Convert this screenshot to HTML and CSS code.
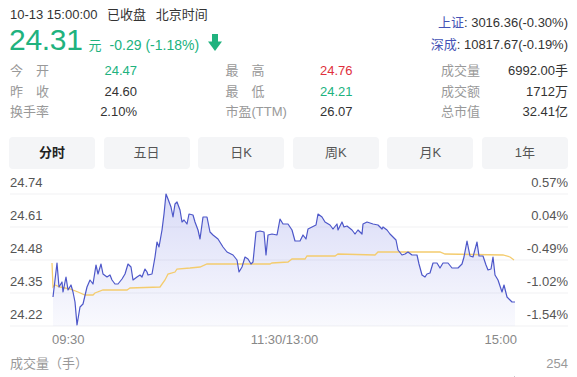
FILE: index.html
```html
<!DOCTYPE html>
<html>
<head>
  <meta charset="utf-8">
  <link rel="stylesheet" href="styles.css">
</head>
<body>
  <div class="page">
    <div class="header">
      <div class="quote">
        <div class="time-line">
          <span>10-13 15:00:00</span>
          <span>已收盘</span>
          <span>北京时间</span>
        </div>
        <div class="price-line">
          <span class="price">24.31</span>
          <span class="unit">元</span>
          <span class="change">-0.29 (-1.18%)</span>
          <svg class="down-arrow" width="14" height="17" viewBox="0 0 14 17">
            <rect x="4" y="0" width="6" height="8" fill="#20b27e"/>
            <polygon points="0,7.5 14,7.5 7,17" fill="#20b27e"/>
          </svg>
        </div>
      </div>
      <div class="index-list">
        <div><span class="index-name">上证</span>: 3016.36(-0.30%)</div>
        <div><span class="index-name">深成</span>: 10817.67(-0.19%)</div>
      </div>
    </div>

    <div class="stats">
      <div class="stat-col">
        <div class="stat-row"><span class="stat-label">今　开</span><span class="stat-value down">24.47</span></div>
        <div class="stat-row"><span class="stat-label">昨　收</span><span class="stat-value">24.60</span></div>
        <div class="stat-row"><span class="stat-label">换手率</span><span class="stat-value">2.10%</span></div>
      </div>
      <div class="stat-col">
        <div class="stat-row"><span class="stat-label">最　高</span><span class="stat-value up">24.76</span></div>
        <div class="stat-row"><span class="stat-label">最　低</span><span class="stat-value down">24.21</span></div>
        <div class="stat-row"><span class="stat-label">市盈(TTM)</span><span class="stat-value">26.07</span></div>
      </div>
      <div class="stat-col">
        <div class="stat-row"><span class="stat-label">成交量</span><span class="stat-value">6992.00手</span></div>
        <div class="stat-row"><span class="stat-label">成交额</span><span class="stat-value">1712万</span></div>
        <div class="stat-row"><span class="stat-label">总市值</span><span class="stat-value">32.41亿</span></div>
      </div>
    </div>

    <div class="tabs">
      <div class="tab active">分时</div>
      <div class="tab">五日</div>
      <div class="tab">日K</div>
      <div class="tab">周K</div>
      <div class="tab">月K</div>
      <div class="tab">1年</div>
    </div>

    <svg class="chart" width="558" height="160" viewBox="10 170 558 160">
      <defs>
        <linearGradient id="area-fill" gradientUnits="userSpaceOnUse" x1="0" y1="190" x2="0" y2="324">
          <stop offset="0" stop-color="#6c74e0" stop-opacity="0.26"/>
          <stop offset="1" stop-color="#6c74e0" stop-opacity="0.04"/>
        </linearGradient>
      </defs>
      <g class="grid">
        <line x1="10" y1="192" x2="568" y2="192"/>
        <line x1="10" y1="225" x2="568" y2="225"/>
        <line x1="10" y1="258" x2="568" y2="258"/>
        <line x1="10" y1="291" x2="568" y2="291"/>
        <line x1="10" y1="324" x2="568" y2="324"/>
      </g>
      <polygon class="area" points="53,324 53,295 57,261 59,285 62,280 63,290 66,275 68,288 71,283 73,290 75,300 77,323 80,305 83,302 87,285 90,278 93,282 96,263 98,272 101,262 103,272 107,275 110,273 112,278 115,282 118,282 122,277 125,272 128,262 131,265 133,278 137,275 140,273 142,275 145,267 147,270 148,273 152,272 155,255 157,240 159,245 162,228 164,212 166,192 168,197 171,205 173,215 175,202 177,200 180,208 182,220 184,218 187,222 189,212 193,213 195,220 198,228 200,237 203,215 207,215 210,230 213,233 218,237 223,245 227,250 233,253 237,258 239,270 242,265 245,255 248,257 251,262 253,260 256,230 260,229 264,230 266,253 268,233 272,232 277,233 280,217 283,222 288,222 292,228 295,239 300,239 303,233 306,237 308,227 312,225 316,223 318,212 322,215 325,220 330,223 333,227 337,222 338,228 342,220 344,225 347,224 352,228 355,232 358,228 362,232 363,222 367,220 373,222 378,223 382,227 383,225 387,228 390,232 393,235 396,238 398,248 402,253 405,252 408,250 412,253 417,253 419,262 422,273 425,275 427,272 430,271 433,261 437,261 440,266 443,261 448,261 452,266 458,266 462,262 464,255 467,239 470,254 473,255 477,240 479,254 483,254 486,263 488,268 491,267 493,255 495,273 498,278 502,290 504,283 507,295 510,298 512,300 515,300 515,324"/>
      <polyline class="avg-line" points="52,261 53,285 55,283 60,285 70,287 78,290 85,293 93,293 95,291 103,288 127,288 130,286 160,285 165,278 168,272 175,270 177,267 190,266 200,265 207,262 270,262 272,261 288,260 292,257 305,257 307,254 335,254 338,252 375,253 378,250 440,250 445,252 503,253 510,255 514,258"/>
      <polyline class="price-line-path" points="53,295 57,261 59,285 62,280 63,290 66,275 68,288 71,283 73,290 75,300 77,323 80,305 83,302 87,285 90,278 93,282 96,263 98,272 101,262 103,272 107,275 110,273 112,278 115,282 118,282 122,277 125,272 128,262 131,265 133,278 137,275 140,273 142,275 145,267 147,270 148,273 152,272 155,255 157,240 159,245 162,228 164,212 166,192 168,197 171,205 173,215 175,202 177,200 180,208 182,220 184,218 187,222 189,212 193,213 195,220 198,228 200,237 203,215 207,215 210,230 213,233 218,237 223,245 227,250 233,253 237,258 239,270 242,265 245,255 248,257 251,262 253,260 256,230 260,229 264,230 266,253 268,233 272,232 277,233 280,217 283,222 288,222 292,228 295,239 300,239 303,233 306,237 308,227 312,225 316,223 318,212 322,215 325,220 330,223 333,227 337,222 338,228 342,220 344,225 347,224 352,228 355,232 358,228 362,232 363,222 367,220 373,222 378,223 382,227 383,225 387,228 390,232 393,235 396,238 398,248 402,253 405,252 408,250 412,253 417,253 419,262 422,273 425,275 427,272 430,271 433,261 437,261 440,266 443,261 448,261 452,266 458,266 462,262 464,255 467,239 470,254 473,255 477,240 479,254 483,254 486,263 488,268 491,267 493,255 495,273 498,278 502,290 504,283 507,295 510,298 512,300 515,300"/>
      <g class="axis-left">
        <text x="10" y="185">24.74</text>
        <text x="10" y="218">24.61</text>
        <text x="10" y="251">24.48</text>
        <text x="10" y="284">24.35</text>
        <text x="10" y="317">24.22</text>
      </g>
      <g class="axis-right">
        <text x="568" y="185">0.57%</text>
        <text x="568" y="218">0.04%</text>
        <text x="568" y="251">-0.49%</text>
        <text x="568" y="284">-1.02%</text>
        <text x="568" y="317">-1.54%</text>
      </g>
    </svg>

    <div class="time-axis">
      <span>09:30</span>
      <span>11:30/13:00</span>
      <span>15:00</span>
    </div>

    <div class="volume-head">
      <span>成交量（手）</span>
      <span>254</span>
    </div>
    <div class="volume-bars">
      <div class="volume-bar"></div>
    </div>
  </div>
</body>
</html>
```

FILE: styles.css
```css
body {
  margin: 0;
  width: 577px;
  font-family: "Liberation Sans", "Noto Sans CJK SC", sans-serif;
  font-size: 13px;
  color: #333;
  background-color: #fff;
}

.page {
  padding: 0 9px 0 10px;
}

.header {
  display: flex;
  justify-content: space-between;
}

.time-line {
  padding-top: 6px;
  line-height: 18px;
  color: #333;
}

.time-line span {
  margin-right: 6px;
}

.price-line {
  display: flex;
  align-items: baseline;
  color: #20b27e;
  height: 32px;
  margin-left: -1px;
}

.price {
  font-size: 30px;
  line-height: 32px;
  letter-spacing: -0.3px;
}

.unit {
  font-size: 13px;
  margin-left: 6px;
}

.change {
  font-size: 14px;
  margin-left: 8px;
}

.down-arrow {
  align-self: center;
  margin-left: 9px;
  margin-top: 4px;
}

.index-list {
  padding-top: 12px;
  line-height: 22px;
  text-align: right;
  color: #333;
}

.index-name {
  color: #4553b5;
}

.stats {
  display: flex;
  justify-content: space-between;
  margin-top: 5px;
}

.stat-col {
  width: 127px;
}

.stat-row {
  display: flex;
  justify-content: space-between;
  line-height: 20.5px;
}

.stat-label {
  color: #999;
}

.stat-value {
  color: #333;
}

.stat-value.up {
  color: #e0303c;
}

.stat-value.down {
  color: #20b27e;
}

.tabs {
  display: flex;
  justify-content: space-between;
  margin-top: 14px;
  margin-left: -1px;
}

.tab {
  width: 86px;
  height: 32px;
  line-height: 32px;
  text-align: center;
  background-color: #f4f5f7;
  border-radius: 4px;
  color: #555;
}

.tab.active {
  color: #222;
  font-weight: bold;
}

.chart {
  display: block;
  margin-top: 3px;
}

.chart text {
  font-family: "Liberation Sans", sans-serif;
  font-size: 13px;
  fill: #555;
}

.axis-right text {
  text-anchor: end;
}

.grid line {
  stroke: #f1f1f3;
  stroke-width: 1;
}

.area {
  fill: url(#area-fill);
}

.avg-line {
  fill: none;
  stroke: #f4cc6e;
  stroke-width: 1.3;
}

.price-line-path {
  fill: none;
  stroke: #4d57c9;
  stroke-width: 1.2;
  stroke-linejoin: round;
}

.time-axis {
  display: flex;
  justify-content: space-between;
  margin: 0 51px 0 42px;
  line-height: 16px;
  color: #888;
}

.volume-head {
  display: flex;
  justify-content: space-between;
  margin-top: 8px;
  line-height: 16px;
  color: #999;
}

.volume-bars {
  display: flex;
  justify-content: flex-end;
  height: 7px;
  padding-right: 53px;
}

.volume-bar {
  width: 1px;
  height: 3px;
  margin-top: 4px;
  background-color: #c8c8cc;
}
```
